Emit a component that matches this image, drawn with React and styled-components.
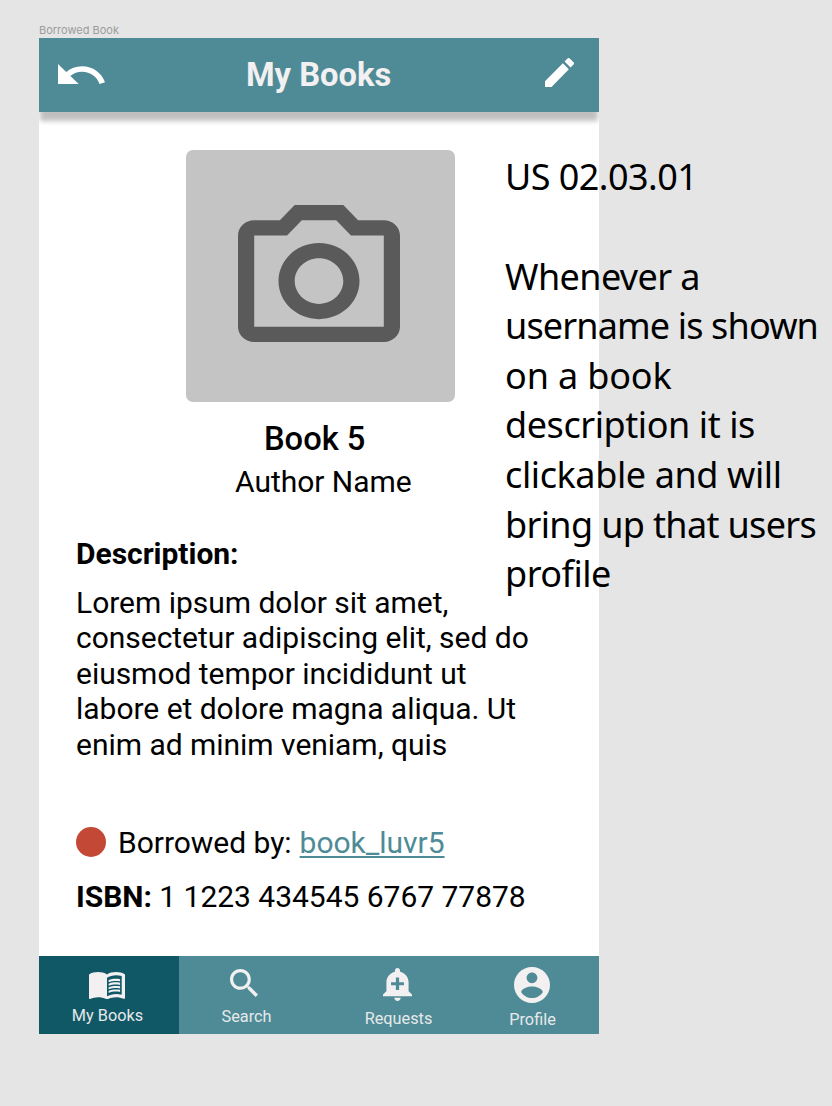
import React from "react";
import styled, { createGlobalStyle } from "styled-components";

const Global = createGlobalStyle`
  * { box-sizing: border-box; }
  body { margin: 0; background: #e5e5e5; font-family: Roboto, sans-serif; color: #000; }
`;

const Canvas = styled.main`
  position: relative;
  width: 832px;
  height: 1106px;
  padding: 23px 0 0 39px;
  overflow: hidden;
  background: #e5e5e5;
`;

const FrameLabel = styled.div`
  height: 15px;
  font: 11px/15px Inter, sans-serif;
  letter-spacing: 0;
  color: #9c9c9c;
`;

const Phone = styled.section`
  display: flex;
  flex-direction: column;
  width: 560px;
  height: 996px;
  overflow: hidden;
  background: #fff;
`;

const Header = styled.header`
  display: flex;
  justify-content: space-between;
  flex: none;
  height: 73.5px;
  padding: 0 25px 0 19px;
  background: #4f8b96;
  box-shadow: 0 10px 5px -1px rgba(0, 0, 0, 0.25);
`;

const Title = styled.h1`
  margin: 0 auto 0 141px;
  font-size: 32.7px;
  line-height: 75px;
  font-weight: 700;
  color: #f2f0f1;
`;

const Icon = styled.svg`
  display: block;
  flex: none;
  width: ${(p) => p.$w}px;
  height: ${(p) => p.$h}px;
  margin-top: ${(p) => p.$top || 0}px;
  margin-right: ${(p) => p.$nudge || 0}px;
  fill: ${(p) => p.$color || "#f2f0f1"};
`;

const Content = styled.div`
  flex: 1;
  display: flex;
  flex-direction: column;
  padding: 38.5px 37px 0;
  letter-spacing: -0.025px;
`;

const Cover = styled.div`
  width: 268.5px;
  height: 252px;
  margin-left: 110px;
  padding: 55px 0 0 52px;
  border-radius: 7px;
  background: #c4c4c4;
`;

const BookTitle = styled.h2`
  margin: 18px 0 0 188px;
  font-size: 32.7px;
  line-height: 38px;
  font-weight: 500;
`;

const Author = styled.p`
  margin: 6px 0 0 159px;
  font-size: 30px;
  line-height: 36px;
`;

const SectionTitle = styled.h3`
  margin: 36px 0 0;
  font-size: 30px;
  line-height: 36px;
  font-weight: 700;
`;

const Description = styled.p`
  margin: 13px 0 0;
  font-size: 30px;
  line-height: 35.4px;
  white-space: pre-line;
`;

const Borrower = styled.div`
  display: flex;
  align-items: center;
  margin-top: 62.5px;
  font-size: 30px;
  line-height: 36px;
`;

const StatusDot = styled.span`
  width: 30px;
  height: 30px;
  margin: 0 12px 1.5px 0;
  border-radius: 50%;
  background: #c34936;
`;

const UserLink = styled.a`
  margin-left: 8px;
  color: #4f8b96;
  text-decoration: underline;
  text-decoration-thickness: 1.5px;
  text-underline-offset: 2.5px;
  text-decoration-skip-ink: none;
`;

const Isbn = styled.p`
  margin: 18px 0 0;
  font-size: 30px;
  line-height: 36px;
`;

const Nav = styled.nav`
  display: grid;
  grid-template-columns: repeat(4, 140px);
  flex: none;
  height: 77.5px;
  margin-bottom: 0.5px;
  background: #4f8b96;
`;

const NavItem = styled.div`
  display: flex;
  flex-direction: column;
  align-items: center;
  padding-left: ${(p) => Math.max(p.$shift, 0) * 2}px;
  padding-right: ${(p) => Math.max(-p.$shift, 0) * 2}px;
  background: ${(p) => (p.$active ? "#115867" : "transparent")};
`;

const NavLabel = styled.span`
  margin-top: ${(p) => p.$gap}px;
  font-size: 16.3px;
  line-height: 20px;
  font-weight: 400;
  color: #e6e9ea;
`;

const Note = styled.aside`
  position: absolute;
  left: 505px;
  top: 152.4px;
  font-family: "Noto Sans", "Open Sans", sans-serif;
  font-size: 36px;
  line-height: 49.6px;
  white-space: nowrap;
`;

const NoteLine = styled.div`
  height: 49.6px;
  letter-spacing: ${(p) => p.$track}px;
`;

const noteLines = [
  ["US 02.03.01", -0.55],
  ["", 0],
  ["Whenever a", -0.6],
  ["username is shown", -0.85],
  ["on a book", -0.15],
  ["description it is", -0.43],
  ["clickable and will", -0.4],
  ["bring up that users", -0.65],
  ["profile", -0.5],
];

const bookPages =
  "M21 5c-1.11-.35-2.33-.5-3.5-.5-1.95 0-4.05.4-5.5 1.5-1.45-1.1-3.55-1.5-5.5-1.5S2.45 4.9 1 6v14.65c0 .25.25.5.5.5.1 0 .15-.05.25-.05C3.1 20.45 5.05 20 6.5 20c1.95 0 4.05.4 5.5 1.5 1.35-.85 3.8-1.5 5.5-1.5 1.65 0 3.35.3 4.75 1.05.1.05.15.05.25.05.25 0 .5-.25.5-.5V6c-.6-.45-1.25-.75-2-1zm0 13.5c-1.1-.35-2.3-.5-3.5-.5-1.7 0-4.15.65-5.5 1.5V8c1.35-.85 3.8-1.5 5.5-1.5 1.2 0 2.4.15 3.5.5v11.5z";

const bookLines = [8.9, 11.1, 13.3, 15.5]
  .map((y) => `M20 ${y}c-.79-.15-1.64-.24-2.5-.24-1.7 0-3.24.29-4.5.83v1.3c1.13-.5 2.7-.8 4.5-.8.88 0 1.73.09 2.5.26z`)
  .join("");

const tabs = [
  {
    label: "My Books", active: true, shift: -1.5, nudge: 0.5, top: 15.5, gap: 7, w: 36, h: 27, box: "1 4.5 22 16.65",
    d: bookPages + bookLines,
  },
  {
    label: "Search", shift: -2.5, nudge: 4.5, top: 13, gap: 10, w: 28, h: 28, box: "3 3 17.49 17.49",
    d: "M15.5 14h-.79l-.28-.27C15.41 12.59 16 11.11 16 9.5 16 5.91 13.09 3 9.5 3S3 5.91 3 9.5 5.91 16 9.5 16c1.61 0 3.09-.59 4.23-1.57l.27.28v.79l5 4.99L20.49 19l-4.99-5zm-6 0C7.01 14 5 11.99 5 9.5S7.01 5 9.5 5 14 7.01 14 9.5 11.99 14 9.5 14z",
  },
  {
    label: "Requests", shift: 9.5, nudge: 2, top: 12, gap: 7.5, w: 29, h: 33, box: "3 2 18 21",
    d: "M10.01 21.01c0 1.1.89 1.99 1.99 1.99s1.99-.89 1.99-1.99h-3.98zm8.87-4.19V11c0-3.25-2.25-5.97-5.29-6.69v-.72C13.59 2.71 12.88 2 12 2s-1.59.71-1.59 1.59v.72C7.37 5.03 5.12 7.75 5.12 11v5.82L3 18.94V20h18v-1.06l-2.12-2.12zM16 13.01h-3v3h-2v-3H8V11h3V8h2v3h3v2.01z",
  },
  {
    label: "Profile", shift: 3.5, nudge: 1, top: 11, gap: 6.5, w: 36, h: 36, box: "2 2 20 20",
    d: "M12 2C6.48 2 2 6.48 2 12s4.48 10 10 10 10-4.48 10-10S17.52 2 12 2zm0 3c1.66 0 3 1.34 3 3s-1.34 3-3 3-3-1.34-3-3 1.34-3 3-3zm0 14.2c-2.5 0-4.71-1.28-6-3.22.03-1.99 4-3.08 6-3.08 1.99 0 5.97 1.09 6 3.08-1.29 1.94-3.5 3.22-6 3.22z",
  },
];

export default function App() {
  return (
    <Canvas>
      <Global />
      <FrameLabel>Borrowed Book</FrameLabel>
      <Phone>
        <Header>
          <Icon $w={47} $h={20} $top={26} $color="#fff" viewBox="2 7 20.47 9" preserveAspectRatio="none">
            <path d="M12.5 8c-2.65 0-5.05.99-6.9 2.6L2 7v9h9l-3.62-3.62c1.39-1.16 3.16-1.88 5.12-1.88 3.54 0 6.55 2.31 7.6 5.5l2.37-.78C21.08 11.03 17.15 8 12.5 8z" />
          </Icon>
          <Title>My Books</Title>
          <Icon $w={29} $h={29.5} $top={19.5} $color="#fff" viewBox="3 3 18 18" preserveAspectRatio="none">
            <path d="M3 17.25V21h3.75L17.81 9.94l-3.75-3.75L3 17.25zM20.71 7.04c.39-.39.39-1.02 0-1.41l-2.34-2.34c-.39-.39-1.02-.39-1.41 0l-1.83 1.83 3.75 3.75 1.83-1.83z" />
          </Icon>
        </Header>
        <Content>
          <Cover>
            <Icon $w={162} $h={137} $color="#5a5a5a" viewBox="2 2 20 18" preserveAspectRatio="none">
              <path d="M14.12 4l1.83 2H20v12H4V6h4.05l1.83-2h4.24M15 2H9L7.17 4H4c-1.1 0-2 .9-2 2v12c0 1.1.9 2 2 2h16c1.1 0 2-.9 2-2V6c0-1.1-.9-2-2-2h-3.17L15 2zm-3 7c1.65 0 3 1.35 3 3s-1.35 3-3 3-3-1.35-3-3 1.35-3 3-3m0-2c-2.76 0-5 2.24-5 5s2.24 5 5 5 5-2.24 5-5-2.24-5-5-5z" />
            </Icon>
          </Cover>
          <BookTitle>Book 5</BookTitle>
          <Author>Author Name</Author>
          <SectionTitle>Description:</SectionTitle>
          <Description>
            {"Lorem ipsum dolor sit amet,\nconsectetur adipiscing elit, sed do\neiusmod tempor incididunt ut\nlabore et dolore magna aliqua. Ut\nenim ad minim veniam, quis"}
          </Description>
          <Borrower>
            <StatusDot />
            <span>Borrowed by:</span>
            <UserLink>book_luvr5</UserLink>
          </Borrower>
          <Isbn>
            <b>ISBN:</b> 1 1223 434545 6767 77878
          </Isbn>
        </Content>
        <Nav>
          {tabs.map((t) => (
            <NavItem key={t.label} $active={t.active} $shift={t.shift}>
              <Icon $w={t.w} $h={t.h} $top={t.top} $nudge={t.nudge} viewBox={t.box} preserveAspectRatio="none">
                <path d={t.d} />
              </Icon>
              <NavLabel $gap={t.gap}>{t.label}</NavLabel>
            </NavItem>
          ))}
        </Nav>
      </Phone>
      <Note>
        {noteLines.map(([text, track], i) => (
          <NoteLine key={i} $track={track}>{text}</NoteLine>
        ))}
      </Note>
    </Canvas>
  );
}
